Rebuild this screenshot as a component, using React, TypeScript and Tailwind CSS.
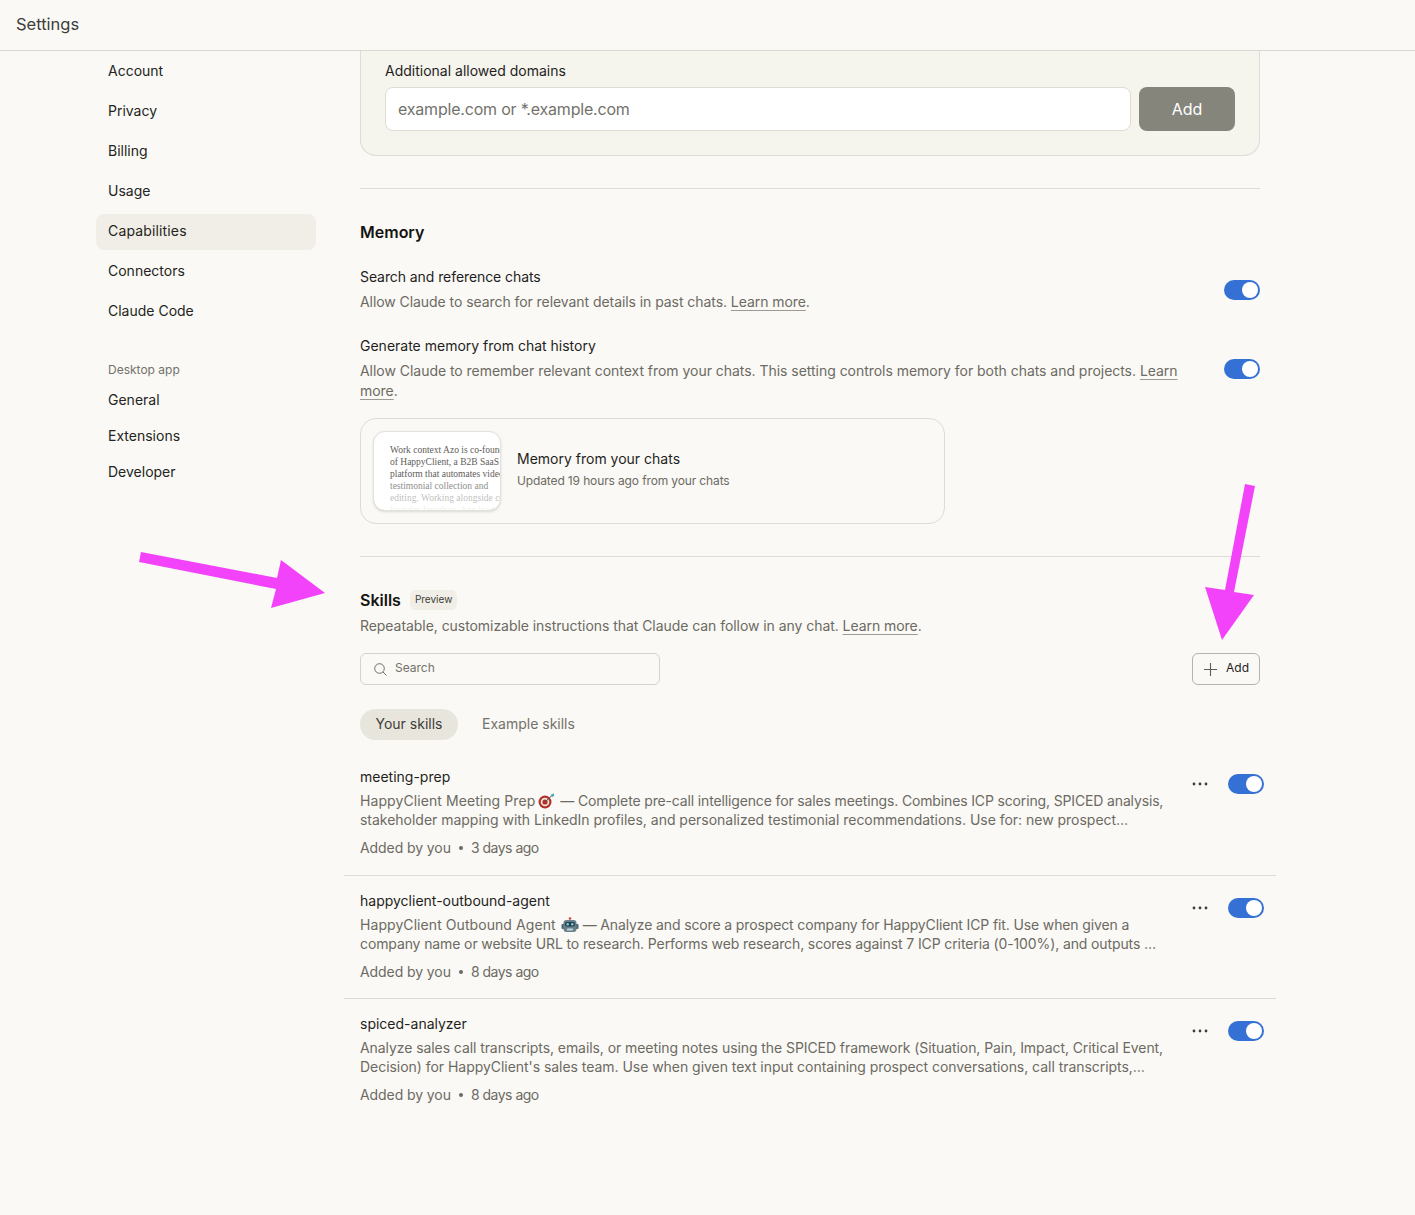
import React from "react";

const font = "font-['Inter','Noto_Sans',sans-serif]";

function Toggle({ className = "" }: { className?: string }) {
  return (
    <div className={`w-9 h-5 rounded-full bg-[#3571d4] relative shrink-0 ${className}`}>
      <div className="absolute right-[2px] top-[2px] w-4 h-4 rounded-full bg-white" />
    </div>
  );
}

function NavItem({ label, active }: { label: string; active?: boolean }) {
  return (
    <div className={`h-9 mb-1 flex items-center px-3 pb-[4px] rounded-lg text-[14px] text-[#242422] ${active ? "bg-[#f0eee6] tracking-[0.15px]" : ""}`}>
      {label}
    </div>
  );
}

function Dart() {
  return (
    <svg width="19" height="16" viewBox="0 0 19 16" className="inline-block align-[-3px] ml-[2px] mr-[4px]">
      <circle cx="8" cy="9" r="6.5" fill="#b3312b" />
      <circle cx="8" cy="9" r="4.3" fill="#f0e6e0" />
      <circle cx="8" cy="9" r="2.6" fill="#b3312b" />
      <path d="M8 9 L15 2.5" stroke="#555" strokeWidth="1" />
      <path d="M14 1.5 L17 0.5 L17 3 L15 4 Z" fill="#3fa7b5" />
    </svg>
  );
}

function Robot() {
  return (
    <svg width="18" height="16" viewBox="0 0 18 16" className="inline-block align-[-3px] ml-[5px] mr-[4px]">
      <circle cx="9" cy="1.5" r="1.3" fill="#d0453a" />
      <rect x="0.5" y="7" width="3" height="5" rx="1" fill="#4d6472" />
      <rect x="14.5" y="7" width="3" height="5" rx="1" fill="#4d6472" />
      <rect x="2.5" y="3" width="13" height="12" rx="3" fill="#66808e" />
      <rect x="4" y="5" width="10" height="4.5" rx="2" fill="#2c3a44" />
      <circle cx="6.7" cy="7.2" r="1.3" fill="#6fd3f0" />
      <circle cx="11.3" cy="7.2" r="1.3" fill="#6fd3f0" />
      <rect x="6" y="11.5" width="6" height="2" rx="0.5" fill="#c9d3d8" />
    </svg>
  );
}

function Skill({
  name,
  line1,
  line2,
  line2Class,
  ago,
  border,
}: {
  name: string;
  line1: React.ReactNode;
  line2: string;
  line2Class: string;
  ago: string;
  border?: boolean;
}) {
  return (
    <div className={`-mx-4 pl-4 pr-3 h-[123px] flex ${border ? "border-t border-[#dedcd3]" : ""}`}>
      <div className="w-[812px] shrink-0">
        <div className="mt-[15px] text-[14px] leading-5 text-[#1f1e1d]">{name}</div>
        <div className="mt-[4px] text-[14px] leading-[19px] text-[#6c6a63] whitespace-nowrap">{line1}</div>
        <div className={`text-[14px] leading-[19px] text-[#6c6a63] whitespace-nowrap ${line2Class}`}>{line2}</div>
        <div className="mt-[9px] flex items-center text-[14px] leading-5 tracking-[-0.08px] text-[#6c6a63]">
          Added by you
          <span className="w-1 h-1 rounded-full bg-[#6c6a63] ml-2 mr-[8px]" />
          <span className="tracking-[-0.5px]">{ago}</span>
        </div>
      </div>
      <div className="ml-auto flex items-start pt-[24px]">
        <svg width="16" height="16" viewBox="0 0 16 16" className="mr-5" fill="#3d3d3a">
          <circle cx="2" cy="8" r="1.4" />
          <circle cx="8" cy="8" r="1.4" />
          <circle cx="14" cy="8" r="1.4" />
        </svg>
        <Toggle className="-mt-[2px]" />
      </div>
    </div>
  );
}

const learn = "underline underline-offset-[3px] decoration-[#9c9a92]";

export default function App() {
  return (
    <div className={`w-[1415px] h-[1215px] bg-[#faf9f5] overflow-hidden relative ${font}`}>
      <header className="h-[51px] border-b border-[#d9d7ce] flex items-center pl-4 pb-[1px] text-[16.5px] text-[#3d3d3a]">
        Settings
      </header>
      <div className="flex">
        <nav className="w-[220px] ml-[96px] mt-[3px] shrink-0">
          <NavItem label="Account" />
          <NavItem label="Privacy" />
          <NavItem label="Billing" />
          <NavItem label="Usage" />
          <NavItem label="Capabilities" active />
          <NavItem label="Connectors" />
          <NavItem label="Claude Code" />
          <div className="mt-[32px] px-3 text-[12px] leading-4 text-[#73726c]">Desktop app</div>
          <div className="mt-[3px] h-9 flex items-center px-3 text-[14px] text-[#242422]">General</div>
          <div className="h-9 flex items-center px-3 text-[14px] text-[#242422]">Extensions</div>
          <div className="h-9 flex items-center px-3 text-[14px] text-[#242422]">Developer</div>
        </nav>

        <main className="w-[900px] ml-[44px] shrink-0">
          {/* allowed domains card */}
          <div className="h-[105px] bg-[#f5f4ed] border-x border-b border-[#dedcd3] rounded-b-2xl pl-6 pr-6 pt-[10px]">
            <div className="text-[14px] leading-5 text-[#1f1e1d]">Additional allowed domains</div>
            <div className="mt-[6px] flex gap-2">
              <div className="w-[746px] h-11 bg-white border border-[#dedcd3] rounded-lg flex items-center px-3 text-[16px] tracking-[-0.2px] text-[#73726c]">
                example.com or *.example.com
              </div>
              <div className="w-[96px] h-11 bg-[#85857c] rounded-lg flex items-center justify-center text-[16px] text-white">Add</div>
            </div>
          </div>

          <div className="mt-8 border-t border-[#dedcd3]" />

          {/* memory */}
          <h2 className="mt-[31px] text-[16px] leading-6 font-semibold text-[#141413]">Memory</h2>

          <div className="mt-[23px] flex items-center justify-between">
            <div>
              <div className="text-[14px] leading-5 tracking-[-0.08px] text-[#1f1e1d]">Search and reference chats</div>
              <div className="mt-[5px] text-[14px] leading-5 tracking-[-0.065px] text-[#6c6a63]">
                Allow Claude to search for relevant details in past chats.{" "}
                <span className={learn}>Learn more</span>.
              </div>
            </div>
            <Toggle />
          </div>

          <div className="mt-[24px] flex justify-between">
            <div className="w-[830px]">
              <div className="text-[14px] leading-5 text-[#1f1e1d]">Generate memory from chat history</div>
              <div className="mt-[5px] text-[14px] leading-5 tracking-[-0.035px] text-[#6c6a63]">
                Allow Claude to remember relevant context from your chats. This setting controls memory for both chats and projects.{" "}
                <span className={learn}>Learn more</span>.
              </div>
            </div>
            <Toggle className="mt-[23px]" />
          </div>

          <div className="mt-[17px] w-[585px] h-[106px] border border-[#dedcd3] rounded-2xl flex items-center pl-3">
            <div className="w-[128px] h-[80px] bg-white border border-[#e3e1d9] rounded-xl shadow-sm overflow-hidden relative pl-4 pt-3 shrink-0 font-['Liberation_Serif',serif] text-[9.5px] leading-3 text-[#5e5d59] whitespace-nowrap">
              <div>Work context Azo is co-founder</div>
              <div>of HappyClient, a B2B SaaS</div>
              <div>platform that automates video</div>
              <div className="opacity-70">testimonial collection and</div>
              <div className="opacity-40">editing. Working alongside co</div>
              <div className="opacity-10">founder Jonathan, Azo leads</div>
            </div>
            <div className="ml-4 -mt-[5px]">
              <div className="text-[14px] leading-5 text-[#1f1e1d]">Memory from your chats</div>
              <div className="mt-[4px] text-[12px] leading-4 tracking-[-0.13px] text-[#6c6a63]">Updated 19 hours ago from your chats</div>
            </div>
          </div>

          <div className="mt-8 border-t border-[#dedcd3]" />

          {/* skills */}
          <div className="mt-[31px] flex items-center gap-[9px]">
            <h2 className="text-[16px] leading-6 font-semibold text-[#141413]">Skills</h2>
            <span className="h-5 px-[5px] pb-[2px] rounded-md bg-[#f0eee6] flex items-center text-[10px] text-[#3d3d3a]">Preview</span>
          </div>
          <div className="mt-[4px] text-[14px] leading-5 tracking-[-0.055px] text-[#6c6a63]">
            Repeatable, customizable instructions that Claude can follow in any chat.{" "}
            <span className={learn}>Learn more</span>.
          </div>

          <div className="mt-[17px] flex justify-between">
            <div className="w-[300px] h-8 border border-[#d5d3ca] rounded-md flex items-center pl-3 text-[12px] text-[#73726c]">
              <svg width="15" height="15" viewBox="0 0 15 15" fill="none" stroke="#5e5d59" strokeWidth="0.9" className="mr-[7px]">
                <circle cx="6.5" cy="6.5" r="4.8" />
                <path d="M10 10 L13.5 13.5" />
              </svg>
              <span className="pb-[2px]">Search</span>
            </div>
            <div className="w-[68px] h-8 border border-[#b5b3ab] rounded-md flex items-center pl-[10px] text-[12px] text-[#1f1e1d]">
              <svg width="15" height="15" viewBox="0 0 15 15" fill="none" stroke="#5e5d59" strokeWidth="1.1" className="mr-2">
                <path d="M7.5 1 V14 M1 7.5 H14" />
              </svg>
              <span className="pb-[2px]">Add</span>
            </div>
          </div>

          <div className="mt-6 flex items-center h-[31px]">
            <div className="w-[98px] h-[31px] pb-[2px] rounded-full bg-[#e8e6dc] flex items-center justify-center text-[14px] text-[#3d3d3a]">Your skills</div>
            <div className="ml-6 pb-[2px] text-[14px] text-[#73726c]">Example skills</div>
          </div>

          <div className="mt-3">
            <Skill
              name="meeting-prep"
              line1={
                <>
                  <span className="tracking-[0.08px]">HappyClient Meeting Prep</span>
                  <Dart />
                  <span className="tracking-[-0.145px]">— Complete pre-call intelligence for sales meetings. Combines ICP scoring, SPICED analysis,</span>
                </>
              }
              line2="stakeholder mapping with LinkedIn profiles, and personalized testimonial recommendations. Use for: new prospect…"
              line2Class="tracking-[-0.02px]"
              ago="3 days ago"
            />
            <Skill
              border
              name="happyclient-outbound-agent"
              line1={
                <>
                  <span className="tracking-[0.07px]">HappyClient Outbound Agent</span>
                  <Robot />
                  <span className="tracking-[-0.13px]">— Analyze and score a prospect company for HappyClient ICP fit. Use when given a</span>
                </>
              }
              line2="company name or website URL to research. Performs web research, scores against 7 ICP criteria (0-100%), and outputs …"
              line2Class="tracking-[-0.115px]"
              ago="8 days ago"
            />
            <Skill
              border
              name="spiced-analyzer"
              line1={<span className="tracking-[-0.075px]">Analyze sales call transcripts, emails, or meeting notes using the SPICED framework (Situation, Pain, Impact, Critical Event,</span>}
              line2="Decision) for HappyClient's sales team. Use when given text input containing prospect conversations, call transcripts,…"
              line2Class="tracking-[-0.04px]"
              ago="8 days ago"
            />
          </div>
        </main>
      </div>

      {/* annotation arrows */}
      <svg className="absolute left-0 top-0 pointer-events-none" width="1415" height="1215" fill="#f243fb">
        <path d="M141 552 L139 562 L276 589 L271 608 L325 593 L281 560 L277 578 Z" />
        <path d="M1245 484 L1255 486 L1234 592 L1254 595 L1222 640 L1205 587 L1225 590 Z" />
      </svg>
    </div>
  );
}
